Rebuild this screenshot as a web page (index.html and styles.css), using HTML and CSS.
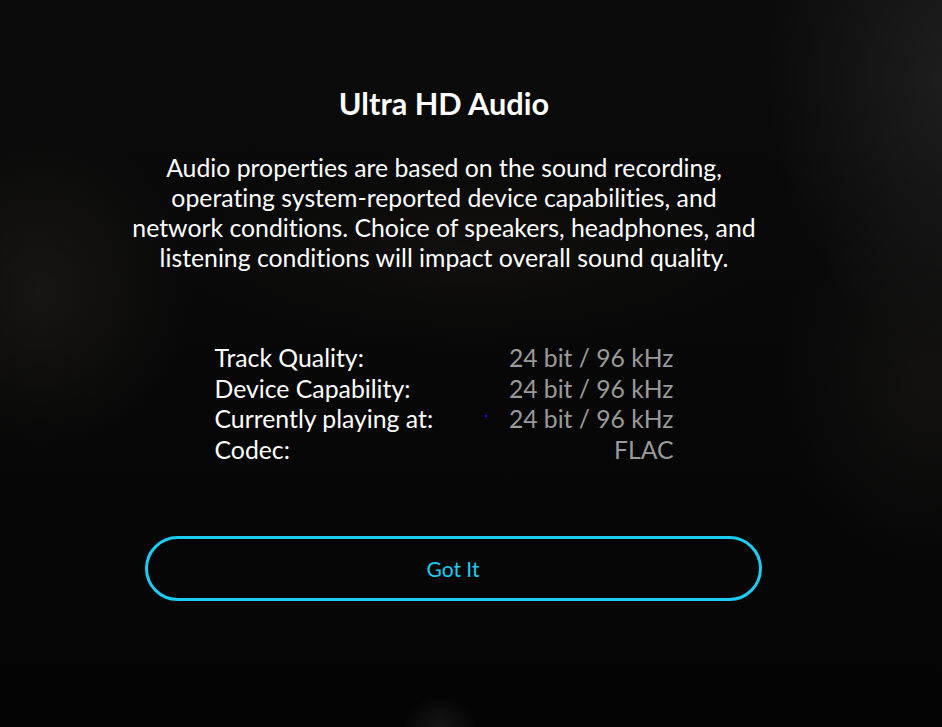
FILE: index.html
```html
<!DOCTYPE html>
<html lang="en">
<head>
<meta charset="utf-8">
<title>Ultra HD Audio</title>
<link rel="stylesheet" href="styles.css">
</head>
<body>
<main class="screen">
  <section class="dialog">
    <h1 class="title">Ultra HD Audio</h1>
    <p class="desc">Audio properties are based on the sound recording, operating system-reported device capabilities, and network conditions. Choice of speakers, headphones, and listening conditions will impact overall sound quality.</p>
    <dl class="props">
      <div class="row"><dt>Track Quality:</dt><dd>24 bit / 96 kHz</dd></div>
      <div class="row"><dt>Device Capability:</dt><dd>24 bit / 96 kHz</dd></div>
      <div class="row"><dt>Currently playing at:</dt><dd>24 bit / 96 kHz</dd></div>
      <div class="row"><dt>Codec:</dt><dd>FLAC</dd></div>
      <span class="dot"></span>
    </dl>
    <button class="btn" type="button">Got It</button>
  </section>
</main>
</body>
</html>
```
FILE: styles.css
```css
html, body {
  margin: 0;
  padding: 0;
  height: 100%;
}
body {
  background: #070707;
  font-family: Lato, "Noto Sans", sans-serif;
  font-variant-ligatures: none;
  color: #fff;
  overflow: hidden;
}
.screen {
  height: 727px;
  box-sizing: border-box;
  padding-right: 54px;
  background:
    radial-gradient(ellipse 200px 220px at 40px 290px, rgba(34,32,28,0.55), transparent 75%),
    radial-gradient(ellipse 260px 360px at 960px 80px, rgba(34,34,34,0.85), transparent 75%),
    radial-gradient(ellipse 200px 260px at 930px 380px, rgba(30,28,26,0.5), transparent 75%),
    radial-gradient(ellipse 420px 140px at 470px 250px, rgba(26,24,20,0.45), transparent 70%),
    radial-gradient(ellipse 50px 40px at 440px 727px, rgba(30,30,30,0.7), transparent 75%),
    linear-gradient(#0b0b0b, #040404);
  display: flex;
  justify-content: center;
}
.dialog {
  width: 634px;
  display: flex;
  flex-direction: column;
  align-items: center;
  padding-top: 86px;
}
.title {
  margin: 0;
  font-size: 30.7px;
  font-weight: 700;
  line-height: 36px;
}
.desc {
  margin: 31px 0 0;
  width: 634px;
  text-align: center;
  font-size: 24.8px;
  line-height: 30px;
}
.props {
  position: relative;
  margin: 70px 0 0;
  width: 459px;
  display: flex;
  flex-direction: column;
  line-height: 30.5px;
}
.row {
  display: flex;
  justify-content: space-between;
}
.row dt { margin: 0; color: #fff; font-size: 24.8px; }
.row dd { margin: 0; color: #9a9a9a; font-size: 24.7px; }
.dot {
  position: absolute;
  left: 270px;
  top: 72px;
  width: 2px;
  height: 2px;
  background: #0a0af0;
}
.btn {
  margin-top: 71px;
  margin-left: 18px;
  width: 617px;
  height: 65px;
  border: 3px solid #1ccdf3;
  border-radius: 33px;
  background: transparent;
  color: #1ccdf3;
  font-family: inherit;
  font-size: 21px;
  cursor: pointer;
}
```
